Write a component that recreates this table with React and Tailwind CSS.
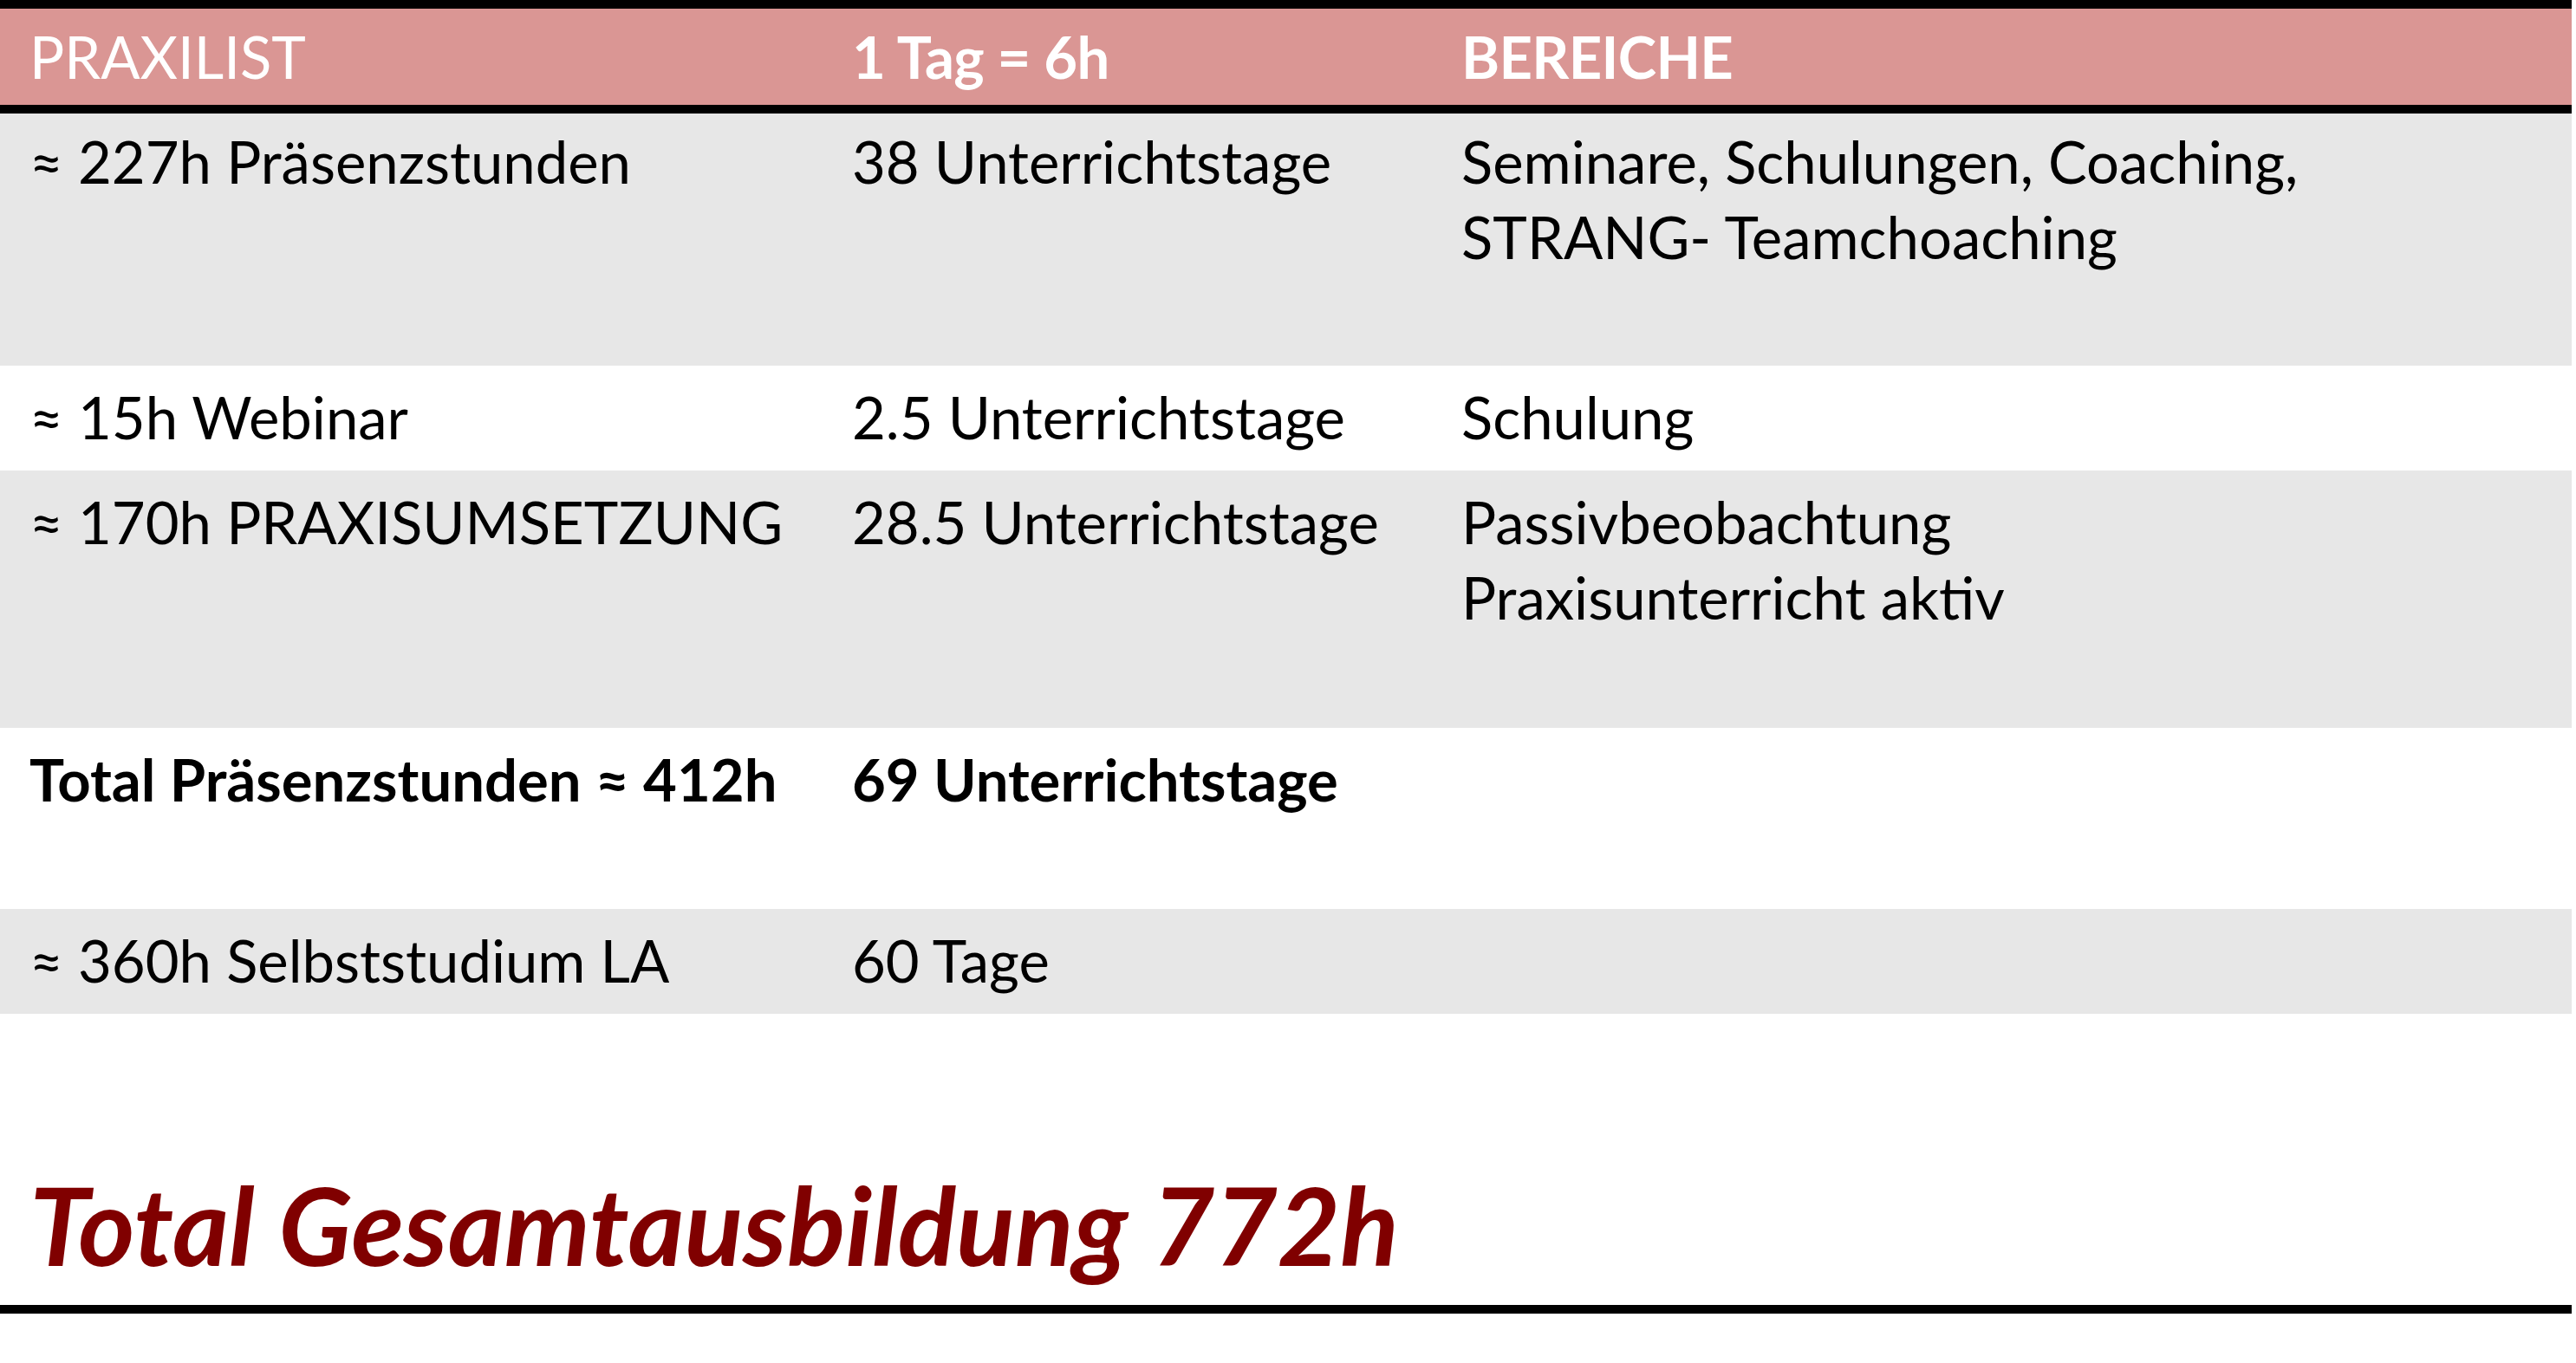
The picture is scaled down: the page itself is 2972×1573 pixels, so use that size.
export default function App() {
  const font = { fontFamily: "Lato, 'Open Sans', sans-serif" };
  const cell = "pl-[34px] pr-[38px]";
  const rows = [
    { bg: "bg-[#e7e7e7]", h: "h-[291px]", pt: "pt-[12px]", c: ["≈ 227h Präsenzstunden", "38 Unterrichtstage", ["Seminare, Schulungen, Coaching,", "STRANG- Teamchoaching"]] },
    { bg: "bg-white", h: "h-[121px]", pt: "pt-[16px]", c: ["≈ 15h Webinar", "2.5 Unterrichtstage", ["Schulung"]] },
    { bg: "bg-[#e7e7e7]", h: "h-[297px]", pt: "pt-[16px]", c: ["≈ 170h PRAXISUMSETZUNG", "28.5 Unterrichtstage", ["Passivbeobachtung", "Praxisunterricht aktiv"]] },
    { bg: "bg-white", h: "h-[209px]", pt: "pt-[16px]", bold: true, c: ["Total Präsenzstunden ≈ 412h", "69 Unterrichtstage", []] },
    { bg: "bg-[#e7e7e7]", h: "h-[121px]", pt: "pt-[16px]", c: ["≈ 360h Selbststudium LA", "60 Tage", []] },
  ];
  return (
    <div className="w-[2972px] h-[1573px] bg-white text-black" style={font}>
      <div className="w-[2967px] border-t-[10px] border-b-[10px] border-black">
        <div className="grid grid-cols-[949px_703px_1fr] h-[111px] items-center bg-[#da9694] text-white text-[67px] leading-[87px] border-b-[10px] border-black box-content">
          <div className={cell}>PRAXILIST</div>
          <div className={cell + " font-bold tracking-[-0.01em]"}>1 Tag = 6h</div>
          <div className={cell + " font-bold tracking-[-0.01em]"}>BEREICHE</div>
        </div>
        {rows.map((r, i) => (
          <div key={i} className={`grid grid-cols-[949px_703px_1fr] ${r.bg} ${r.h} ${r.pt} text-[67px] leading-[87px] ${r.bold ? "font-bold" : ""}`}>
            <div className={cell + " whitespace-nowrap"}>{r.c[0]}</div>
            <div className={cell + " whitespace-nowrap"}>{r.c[1]}</div>
            <div className={cell}>
              {r.c[2].map((l, j) => (
                <div key={j} className="whitespace-nowrap">{l}</div>
              ))}
            </div>
          </div>
        ))}
        <div className="h-[336px] pt-[168px] pl-[34px]">
          <div className="text-[125px] leading-[150px] font-bold italic text-[#800000] whitespace-nowrap">Total Gesamtausbildung 772h</div>
        </div>
      </div>
    </div>
  );
}
